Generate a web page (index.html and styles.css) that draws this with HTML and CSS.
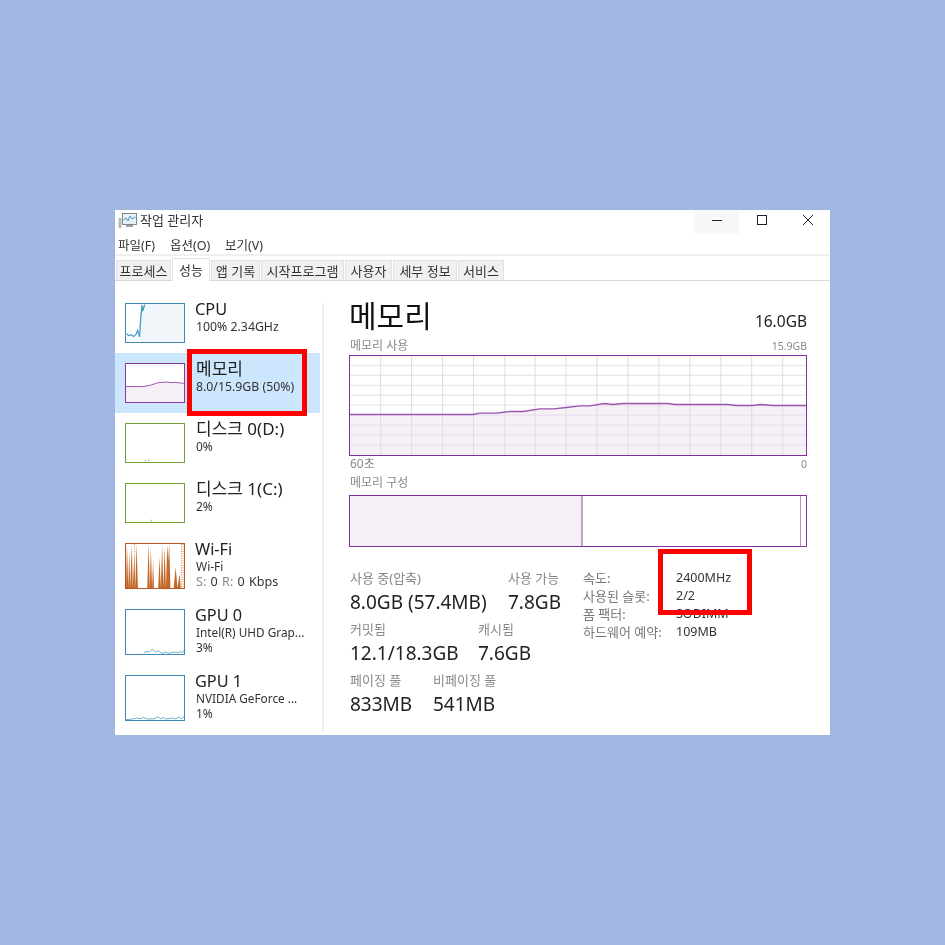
FILE: index.html
```html
<!DOCTYPE html>
<html lang="ko">
<head>
<meta charset="utf-8">
<title>작업 관리자</title>
<link rel="stylesheet" href="styles.css">
</head>
<body>
<div class="window">
  <header class="titlebar">
    <div class="title">
      <svg class="app-icon" width="20" height="18" viewBox="0 0 20 18">
        <rect x="0.5" y="7" width="3" height="10" fill="#b9bcbc"/>
        <rect x="4.5" y="2.5" width="14" height="11" fill="#e6f1f7" stroke="#7c8a94"/>
        <path d="M5.5 9 L8 7 L10 10 L12 5 L14 8 L17.5 6" fill="none" stroke="#4a9cc4"/>
        <rect x="8" y="14" width="7" height="2" fill="#9aa3a8"/>
      </svg>
      <span>작업 관리자</span>
    </div>
    <div class="controls">
      <div class="ctl ctl-hover"><svg width="12" height="12" viewBox="0 0 12 12"><path d="M1 6.5 H11" stroke="#222"/></svg></div>
      <div class="ctl"><svg width="12" height="12" viewBox="0 0 12 12"><rect x="0.5" y="1.5" width="9" height="9" fill="none" stroke="#222"/></svg></div>
      <div class="ctl ctl-close"><svg width="12" height="12" viewBox="0 0 12 12"><path d="M1 1 L11 11 M11 1 L1 11" stroke="#222"/></svg></div>
    </div>
  </header>
  <nav class="menu">
    <span class="m1">파일(F)</span><span class="m2">옵션(O)</span><span>보기(V)</span>
  </nav>
  <div class="tabs">
    <div class="tab t1">프로세스</div>
    <div class="tab t2 active">성능</div>
    <div class="tab t3">앱 기록</div>
    <div class="tab t4">시작프로그램</div>
    <div class="tab t5">사용자</div>
    <div class="tab t6">세부 정보</div>
    <div class="tab t7">서비스</div>
  </div>
  <div class="body">
    <aside class="side">
      <div class="item">
        <svg class="thumb cpu" viewBox="0 0 180 118" preserveAspectRatio="none">
          <rect x="45" y="0" width="135" height="118" fill="#f1f6fa"/>
          <path d="M2 92 L8 98 L16 96 L24 101 L32 93 L36 82 L42 102 L46 40 L50 3 L52 22 L58 2" fill="none" stroke="#4a9cc4" stroke-width="4"/>
        </svg>
        <div class="info"><div class="name">CPU</div><div class="sub wide">100% 2.34GHz</div></div>
      </div>
      <div class="item selected">
        <svg class="thumb mem" viewBox="0 0 180 118" preserveAspectRatio="none">
          <rect width="180" height="118" fill="#fff"/>
          <path d="M0 70 H55 L75 66 L100 58 L125 56 L180 60 V118 H0 Z" fill="#f4f0f5"/>
          <path d="M0 70 H55 L75 66 L100 58 L125 56 L140 58 L150 57 L180 60" fill="none" stroke="#9a55b0" stroke-width="3"/>
        </svg>
        <div class="info"><div class="name ko">메모리</div><div class="sub wide">8.0/15.9GB (50%)</div></div>
      </div>
      <div class="item">
        <svg class="thumb disk" viewBox="0 0 180 118" preserveAspectRatio="none">
          <path d="M60 116 V112 M70 116 V112" stroke="#7aa63c" stroke-width="3"/>
        </svg>
        <div class="info"><div class="name ko">디스크 0(D:)</div><div class="sub">0%</div></div>
      </div>
      <div class="item">
        <svg class="thumb disk" viewBox="0 0 180 118" preserveAspectRatio="none">
          <path d="M78 116 V111" stroke="#7aa63c" stroke-width="3"/>
        </svg>
        <div class="info"><div class="name ko">디스크 1(C:)</div><div class="sub">2%</div></div>
      </div>
      <div class="item item-tall">
        <svg class="thumb wifi" viewBox="0 0 180 132" preserveAspectRatio="none">
          <path d="M0 132 L3 0 L7 132 L10 20 L13 132 L18 0 L21 132 L26 30 L29 132 L33 0 L37 132 H66 L70 0 L74 132 L77 10 L81 132 L84 50 L87 132 H100 L104 40 L108 132 L112 0 L116 132 L120 10 L124 132 L128 0 L131 50 L134 0 L138 132 H148 L154 70 L160 132 L166 90 L170 132 Z" fill="#c4682a"/>
          <path d="M27 0 V132 M68 100 V132 M172 0 V132 M177 0 V132" stroke="#d98f58" stroke-width="3" stroke-dasharray="3 4"/>
        </svg>
        <div class="info"><div class="name">Wi-Fi</div><div class="sub">Wi-Fi</div><div class="sub kbps"><span class="dim">S:</span> 0 <span class="dim">R:</span> 0 Kbps</div></div>
      </div>
      <div class="item item-tall">
        <svg class="thumb gpu" viewBox="0 0 180 136" preserveAspectRatio="none">
          <path d="M55 134 L62 128 L72 130 L82 122 L92 130 L100 126 L108 132 L116 134 L124 130 L132 134 L150 130 L160 132 L170 128 L175 132 L180 124" fill="none" stroke="#4a9cc4" stroke-width="2.5"/>
        </svg>
        <div class="info"><div class="name">GPU 0</div><div class="sub narrow">Intel(R) UHD Grap...</div><div class="sub">3%</div></div>
      </div>
      <div class="item item-tall">
        <svg class="thumb gpu" viewBox="0 0 180 136" preserveAspectRatio="none">
          <path d="M0 135 L20 133 L35 130 L45 132 L55 128 L65 133 L90 132 L98 126 L108 132 L116 128 L124 133 L145 130 L152 133 L165 127 L172 133 L180 124" fill="none" stroke="#4a9cc4" stroke-width="2.5"/>
        </svg>
        <div class="info"><div class="name">GPU 1</div><div class="sub narrow">NVIDIA GeForce ...</div><div class="sub">1%</div></div>
      </div>
    </aside>
    <div class="divider"></div>
    <main class="main">
      <div class="heading"><h1>메모리</h1><div class="total">16.0GB</div></div>
      <div class="caption"><span>메모리 사용</span><span class="small">15.9GB</span></div>
      <svg class="chart" viewBox="30 452 1370 298" preserveAspectRatio="none">
        <path d="M30 628 H400 L420 624 H470 L510 619 H550 L600 611 H640 L680 607 L720 602 H750 L795 595 L820 598 L850 595 H985 L1005 598 H1165 L1190 601 H1240 L1265 598 L1300 601 H1400 V750 H30 Z" fill="#f4f0f5"/>
        <path class="grid-h" d="M30 480 H1400 M30 510 H1400 M30 540 H1400 M30 570 H1400 M30 600 H1400 M30 630 H1400 M30 660 H1400 M30 690 H1400 M30 720 H1400"/>
        <path class="grid-v" d="M122 452 V750 M215 452 V750 M308 452 V750 M401 452 V750 M495 452 V750 M586 452 V750 M679 452 V750 M772 452 V750 M865 452 V750 M958 452 V750 M1051 452 V750 M1144 452 V750 M1237 452 V750 M1330 452 V750"/>
        <path class="mem-line" d="M30 628 H400 L420 624 H470 L510 619 H550 L600 611 H640 L680 607 L720 602 H750 L795 595 L820 598 L850 595 H985 L1005 598 H1165 L1190 601 H1240 L1265 598 L1300 601 H1400"/>
      </svg>
      <div class="caption axis"><span>60초</span><span class="small">0</span></div>
      <div class="caption comp"><span>메모리 구성</span></div>
      <div class="bar">
        <div class="seg seg-used"></div>
        <div class="seg seg-free"></div>
        <div class="seg seg-rest"></div>
      </div>
      <div class="stats">
        <div class="left">
          <div class="row">
            <div class="stat w-inuse"><div class="lab">사용 중(압축)</div><div class="val">8.0GB (57.4MB)</div></div>
            <div class="stat"><div class="lab">사용 가능</div><div class="val">7.8GB</div></div>
          </div>
          <div class="row">
            <div class="stat w-commit"><div class="lab">커밋됨</div><div class="val">12.1/18.3GB</div></div>
            <div class="stat"><div class="lab">캐시됨</div><div class="val">7.6GB</div></div>
          </div>
          <div class="row">
            <div class="stat w-paged"><div class="lab">페이징 풀</div><div class="val">833MB</div></div>
            <div class="stat"><div class="lab">비페이징 풀</div><div class="val">541MB</div></div>
          </div>
        </div>
        <dl class="spec">
          <dt>속도:</dt><dd>2400MHz</dd>
          <dt>사용된 슬롯:</dt><dd>2/2</dd>
          <dt>폼 팩터:</dt><dd>SODIMM</dd>
          <dt>하드웨어 예약:</dt><dd>109MB</dd>
        </dl>
      </div>
    </main>
    <div class="mark mark-a"></div>
    <div class="mark mark-b"></div>
  </div>
</div>
</body>
</html>
```

FILE: styles.css
```css
* { box-sizing: border-box; }
html, body { height: 100%; }
body {
  margin: 0;
  background: #a0b7e2;
  display: flex;
  align-items: center;
  justify-content: center;
  font-family: "Noto Sans", "Noto Sans CJK KR", sans-serif;
  color: #222;
}
.window {
  width: 715px;
  height: 525px;
  background: #fff;
  display: flex;
  flex-direction: column;
  filter: blur(0.3px);
}
.titlebar {
  height: 24px;
  display: flex;
  justify-content: space-between;
  flex: none;
}
.title {
  display: flex;
  align-items: center;
  gap: 2px;
  padding: 0 0 5px 3px;
  font-size: 13px;
  color: #333;
}
.controls { display: flex; }
.ctl {
  width: 46px;
  height: 24px;
  padding-bottom: 4px;
  display: flex;
  align-items: center;
  justify-content: center;
}
.ctl-hover { background: #f8f8f8; width: 45px; margin-right: 1px; }
.ctl-close { width: 44px; }
.menu {
  height: 22px;
  flex: none;
  padding: 0 0 0 3px;
  display: flex;
  align-items: center;
  font-size: 12.5px;
  color: #333;
  border-bottom: 2px solid #f0f0f0;
}
.menu .m1 { width: 52px; }
.menu .m2 { width: 55px; }
.tabs {
  height: 25px;
  flex: none;
  display: flex;
  align-items: flex-end;
  padding-left: 1px;
  border-bottom: 1px solid #d9d9d9;
}
.tab {
  height: 20px;
  margin-right: 1px;
  padding-bottom: 1px;
  background: #f0f0f0;
  border: 1px solid #e2e2e2;
  border-bottom: none;
  font-size: 13px;
  color: #333;
  display: flex;
  align-items: center;
  justify-content: center;
  white-space: nowrap;
}
.tab.active {
  height: 23px;
  background: #fff;
  margin-bottom: -1px;
  padding-bottom: 2px;
}
.t1 { width: 55px; }
.t2 { width: 38px; }
.t3 { width: 49px; }
.t4 { width: 83px; }
.t5 { width: 47px; }
.t6 { width: 64px; }
.t7 { width: 46px; }
.body {
  flex: 1;
  display: flex;
  position: relative;
  min-height: 0;
}
.side {
  width: 207px;
  flex: none;
  padding-top: 12px;
}
.divider {
  width: 2px;
  flex: none;
  margin: 22px 0 3px;
  background: #efefef;
}
.item {
  height: 60px;
  width: 205px;
  display: flex;
  padding: 10px 0 0 10px;
  gap: 10px;
}
.item.selected { background: #cce6fd; }
.item-tall { height: 66px; }
.thumb {
  width: 60px;
  height: 40px;
  flex: none;
  background: #fff;
  border: 1px solid;
}
.thumb.cpu { border-color: #3f87ad; }
.thumb.mem { border-color: #8a36a8; }
.thumb.disk { border-color: #6fa02e; }
.thumb.wifi { border-color: #b9581c; height: 46px; }
.thumb.gpu { border-color: #3f87b5; height: 46px; }
.info { margin-top: -4px; min-width: 0; }
.name { font-size: 16.3px; line-height: 20px; height: 20px; color: #222; white-space: nowrap; }
.name.ko { font-size: 17px; line-height: 20px; margin-left: 1px; }
.sub { font-size: 12px; line-height: 15px; margin-left: 1px; color: #333; white-space: nowrap; }
.sub.wide { font-size: 12.3px; }
.sub.narrow { font-size: 11.8px; }
.sub.kbps { font-size: 12.6px; word-spacing: 1px; }
.dim { color: #888; }
.main {
  flex: 1;
  padding: 0 23px 0 25px;
  min-width: 0;
}
.heading {
  display: flex;
  justify-content: space-between;
  align-items: flex-end;
  height: 55px;
}
h1 {
  margin: 0;
  font-size: 30px;
  font-weight: 400;
  line-height: 40px;
  color: #111;
}
.total { font-size: 15.5px; line-height: 24px; color: #222; padding-bottom: 3px; }
.caption {
  display: flex;
  justify-content: space-between;
  align-items: center;
  height: 19px;
  padding-left: 1px;
  font-size: 12px;
  line-height: 16px;
  color: #888;
}
.small { font-size: 10.5px; }
.chart {
  display: block;
  width: 458px;
  height: 101px;
  border: 1px solid #7f2fa0;
  background: #fff;
}
.grid-h { stroke: #eadcee; stroke-width: 3; fill: none; }
.grid-v { stroke: #e0dbe4; stroke-width: 3; fill: none; }
.mem-line { stroke: #9a55b0; stroke-width: 4; fill: none; }
.axis { height: 16px; }
.comp { height: 18px; padding-top: 4px; }
.bar {
  width: 458px;
  height: 52px;
  border: 1px solid #7f2fa0;
  display: flex;
  margin-top: 5px;
}
.seg-used { width: 233px; background: #f4f0f5; border-right: 2px solid #c0a4cc; }
.seg-free { flex: 1; }
.seg-rest { width: 6px; border-left: 1px solid #b896c4; }
.stats { display: flex; margin-top: 22px; }
.left { width: 234px; flex: none; padding-left: 1px; }
.row { display: flex; height: 51px; }
.stat { flex: none; }
.w-inuse { width: 158px; }
.w-commit { width: 128px; }
.w-paged { width: 83px; }
.lab { font-size: 13px; line-height: 19px; color: #888; }
.val { font-size: 19px; line-height: 29px; color: #222; white-space: nowrap; }
.spec {
  margin: 0;
  display: grid;
  grid-template-columns: 93px auto;
  grid-auto-rows: 18px;
  font-size: 12.5px;
  line-height: 18px;
}
.spec dt { color: #777; font-size: 13px; }
.spec dd { margin: 0; color: #333; }
.mark {
  position: absolute;
  border: 5px solid #f00;
}
.mark-a { left: 72px; top: 68px; width: 120px; height: 67px; }
.mark-b { left: 543px; top: 268px; width: 94px; height: 66px; }
```
